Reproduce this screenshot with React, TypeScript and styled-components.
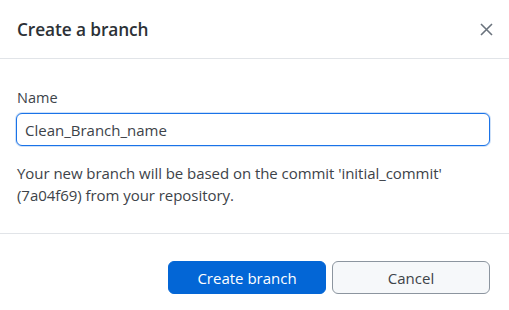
import React from 'react';
import styled, { createGlobalStyle } from 'styled-components';

const GlobalStyle = createGlobalStyle`
    html, body {
        margin: 0;
        padding: 0;
        background: #ffffff;
    }
    body {
        font-family: "Open Sans", "Noto Sans", sans-serif;
        color: #24292f;
    }
`;

const Dialog = styled.div`
    width: 509px;
    height: 310px;
    display: flex;
    flex-direction: column;
    background: #ffffff;
`;

const Header = styled.div`
    height: 58px;
    display: flex;
    align-items: center;
    justify-content: space-between;
    padding: 0 11px 0 17px;
    border-bottom: 1px solid #e1e4e8;
`;

const Title = styled.h2`
    margin: 0;
    font-size: 17.3px;
    font-weight: 600;
    color: #2c3136;
    letter-spacing: -0.1px;
`;

const CloseButton = styled.button`
    width: 24px;
    height: 24px;
    border: none;
    background: none;
    padding: 0;
    display: flex;
    align-items: center;
    justify-content: center;
    cursor: pointer;
    color: #6a737d;
`;

const Body = styled.div`
    display: flex;
    flex-direction: column;
    padding: 29px 17px 27px 17px;
    border-bottom: 1px solid #e1e4e8;
`;

const Label = styled.label`
    font-size: 14.5px;
    color: #3d4349;
    margin-bottom: 6px;
`;

const Input = styled.input`
    box-sizing: border-box;
    width: 474px;
    height: 33px;
    margin-left: -1px;
    padding: 0 8px;
    font-family: inherit;
    font-size: 15px;
    color: #3d4349;
    border: 1px solid #1a73e8;
    border-radius: 6px;
    box-shadow: 0 0 0 1px #cfe1f8;
    outline: none;
    caret-color: #000;
`;

const Hint = styled.p`
    margin: 16px 0 0 0;
    font-size: 15px;
    line-height: 22px;
    color: #3d4349;
    letter-spacing: -0.05px;
`;

const Footer = styled.div`
    display: flex;
    justify-content: flex-end;
    gap: 6px;
    padding: 27px 19px 0 0;
`;

const ActionButton = styled.button<{ $primary?: boolean }>`
    box-sizing: border-box;
    width: 158px;
    height: 33px;
    border-radius: 6px;
    font-family: inherit;
    font-size: 15px;
    cursor: pointer;
    border: 1px solid ${(p) => (p.$primary ? '#0366d6' : '#8c959f')};
    background: ${(p) => (p.$primary ? '#0366d6' : '#f6f8fa')};
    color: ${(p) => (p.$primary ? '#ffffff' : '#3d4349')};
`;

function CloseIcon() {
    return (
        <svg width="13" height="13" viewBox="0 0 13 13" fill="none">
            <path d="M1 1L12 12M12 1L1 12" stroke="currentColor" strokeWidth="1.6" />
        </svg>
    );
}

export default function App() {
    return (
        <Dialog>
            <GlobalStyle />
            <Header>
                <Title>Create a branch</Title>
                <CloseButton aria-label="Close">
                    <CloseIcon />
                </CloseButton>
            </Header>
            <Body>
                <Label htmlFor="branch-name">Name</Label>
                <Input id="branch-name" defaultValue="Clean_Branch_name" autoFocus />
                <Hint>
                    Your new branch will be based on the commit 'initial_commit'
                    <br />
                    (7a04f69) from your repository.
                </Hint>
            </Body>
            <Footer>
                <ActionButton $primary>Create branch</ActionButton>
                <ActionButton>Cancel</ActionButton>
            </Footer>
        </Dialog>
    );
}
